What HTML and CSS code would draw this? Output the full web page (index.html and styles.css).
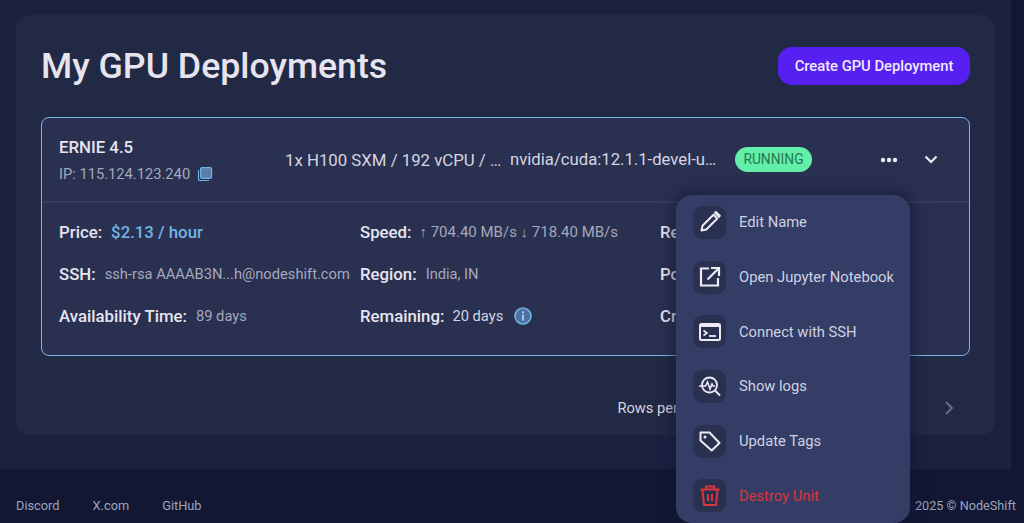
FILE: index.html
```html
<!DOCTYPE html>
<html lang="en">
<head>
<meta charset="utf-8">
<title>My GPU Deployments</title>
<link rel="stylesheet" href="styles.css">
</head>
<body>
<div class="page">
  <main class="main">
    <section class="panel">
      <header class="panel-head">
        <h1 class="title">My GPU Deployments</h1>
        <button class="create-btn">Create GPU Deployment</button>
      </header>
      <article class="deploy">
        <div class="deploy-head">
          <div class="name-col">
            <div class="name">ERNIE 4.5</div>
            <div class="ip">IP: 115.124.123.240
              <svg class="copy-icon" viewBox="0 0 16 16" width="16" height="16"><path d="M1.5 4v9.2c0 .8.6 1.3 1.3 1.3H12" fill="none" stroke="#6fb1e6" stroke-width="1.2"/><rect x="3.6" y="1.6" width="11" height="10.8" rx="1.6" fill="#5a7ea8" stroke="#6fb1e6" stroke-width="1.2"/></svg>
            </div>
          </div>
          <div class="spec">1x H100 SXM / 192 vCPU / …</div>
          <div class="image">nvidia/cuda:12.1.1-devel-u…</div>
          <span class="status">RUNNING</span>
          <div class="head-actions">
            <svg viewBox="0 0 18 6" width="18" height="6"><circle cx="3" cy="3" r="2.2" fill="#eceaf4"/><circle cx="9" cy="3" r="2.2" fill="#eceaf4"/><circle cx="15" cy="3" r="2.2" fill="#eceaf4"/></svg>
            <svg viewBox="0 0 14 9" width="14" height="9"><path d="M1.5 1.5 7 7l5.5-5.5" fill="none" stroke="#eceaf4" stroke-width="2.2"/></svg>
          </div>
        </div>
        <div class="deploy-body">
          <div class="field"><span class="label">Price:</span><span class="price">$2.13 / hour</span></div>
          <div class="field"><span class="label">Speed:</span><span class="value speed">↑ 704.40 MB/s ↓ 718.40 MB/s</span></div>
          <div class="field"><span class="label">Reliability:</span></div>
          <div class="field"><span class="label">SSH:</span><span class="value">ssh-rsa AAAAB3N...h@nodeshift.com</span></div>
          <div class="field"><span class="label">Region:</span><span class="value">India, IN</span></div>
          <div class="field"><span class="label">Ports:</span></div>
          <div class="field"><span class="label">Availability Time:</span><span class="value">89 days</span></div>
          <div class="field"><span class="label">Remaining:</span><span class="value strong">20 days</span>
            <svg class="info" viewBox="0 0 18 18" width="18" height="18"><circle cx="9" cy="9" r="8" fill="#50709f" stroke="#6fb1e6" stroke-width="1.6"/><rect x="8" y="7.6" width="2" height="6" fill="#9fcbf0"/><rect x="8" y="4.4" width="2" height="2" fill="#9fcbf0"/></svg>
          </div>
          <div class="field"><span class="label">Created:</span></div>
        </div>
      </article>
      <footer class="pager">
        <span class="rows">Rows per page</span>
        <svg viewBox="0 0 10 16" width="10" height="16"><path d="M2 2l6 6-6 6" fill="none" stroke="#6a7190" stroke-width="1.8"/></svg>
      </footer>
    </section>
  </main>
  <footer class="site-foot">
    <nav class="foot-links"><a>Discord</a><a>X.com</a><a>GitHub</a></nav>
    <span class="copyright">2025 © NodeShift</span>
  </footer>
</div>
<div class="menu">
  <div class="menu-item"><span class="menu-icon"><svg viewBox="0 0 24 24" width="24" height="24"><path d="M3.500 20.500l1-4.800L15.500 4.700l3.800 3.800L8.300 19.500z" fill="none" stroke="#eceaf4" stroke-width="2" stroke-linejoin="round"/><path d="M16.800 2.900l1.200-1 4 4-1 1.200z" fill="#eceaf4" stroke="#eceaf4" stroke-width="1.600"/></svg></span>Edit Name</div>
  <div class="menu-item"><span class="menu-icon"><svg viewBox="0 0 24 24" width="24" height="24"><path d="M11 3.500H3v17h17V13" fill="none" stroke="#eceaf4" stroke-width="2.200"/><path d="M9.500 14.500 20 4M13 3h8v8" fill="none" stroke="#eceaf4" stroke-width="2.200"/></svg></span>Open Jupyter Notebook</div>
  <div class="menu-item"><span class="menu-icon"><svg viewBox="0 0 24 24" width="24" height="24"><rect x="2" y="4" width="20" height="16" rx="1.500" fill="none" stroke="#eceaf4" stroke-width="2"/><path d="M2 5h20v2H2z" fill="#eceaf4"/><path d="M5.500 10.500 9 13l-3.500 2.500" fill="none" stroke="#eceaf4" stroke-width="1.600"/><path d="M11 16h7" stroke="#eceaf4" stroke-width="1.800"/></svg></span>Connect with SSH</div>
  <div class="menu-item"><span class="menu-icon"><svg viewBox="0 0 24 24" width="24" height="24"><circle cx="11.500" cy="11" r="7.500" fill="none" stroke="#eceaf4" stroke-width="1.800"/><path d="M17 16.500l5 5" stroke="#eceaf4" stroke-width="2"/><path d="M1 12h6.500l2-4 2.500 7 2-5 1 2h2" fill="none" stroke="#eceaf4" stroke-width="1.600"/></svg></span>Show logs</div>
  <div class="menu-item"><span class="menu-icon"><svg viewBox="0 0 24 24" width="24" height="24"><path d="M2.500 3.500h9l10 10.500-7.800 7.500L2.500 11.500z" fill="none" stroke="#eceaf4" stroke-width="2" stroke-linejoin="round"/><circle cx="7" cy="8" r="1.500" fill="#eceaf4"/></svg></span>Update Tags</div>
  <div class="menu-item danger"><span class="menu-icon"><svg viewBox="0 0 24 24" width="24" height="24"><path d="M2.500 5.500h19M8 5V2.500h8V5" fill="none" stroke="#d8363a" stroke-width="2"/><path d="M4.500 6l1.500 15h12l1.500-15" fill="none" stroke="#d8363a" stroke-width="2"/><path d="M10 10v7M14 10v7" stroke="#d8363a" stroke-width="2"/></svg></span>Destroy Unit</div>
</div>
</body>
</html>
```
FILE: styles.css
```css
* { box-sizing: border-box; }
html, body { margin: 0; height: 523px; overflow: hidden; }
body { background: #121833; font-family: Roboto, "Liberation Sans", sans-serif; color: #eceaf4; position: relative; }
.page { height: 523px; display: flex; flex-direction: column; }
.main { width: 1011px; height: 469px; padding: 15px 16px 34px; background: #1b2240; flex: none; }
.panel { height: 420px; background: #222945; border-radius: 14px; padding: 32px 25px 0; display: flex; flex-direction: column; }
.panel-head { height: 38px; display: flex; justify-content: space-between; align-items: center; }
.title { margin: 0; font-size: 35.700px; font-weight: 500; line-height: 38px; color: #e6e4ee; }
.create-btn { width: 192px; height: 38px; border: 0; border-radius: 14px; background: #5720f3; color: #eeeafc; font: 500 14.750px Roboto, sans-serif; }
.deploy { margin-top: 32px; height: 239px; background: #2a3050; border: 1px solid #78b6ea; border-radius: 8px; display: flex; flex-direction: column; }
.deploy-head { height: 85px; border-bottom: 2px solid #363d5e; padding-left: 17px; display: flex; align-items: center; }
.name-col { width: 226px; padding-top: 1px; }
.name { font-size: 16.800px; font-weight: 500; line-height: 20px; color: #e6e5f0; }
.ip { margin-top: 8px; font-size: 14.700px; line-height: 18px; color: #a5a8bd; display: flex; align-items: center; gap: 7px; }
.copy-icon { flex: none; }
.spec { width: 225px; font-size: 16.800px; color: #d5d5e2; }
.image { width: 225px; font-size: 16.700px; color: #d5d5e2; }
.status { width: 77px; height: 25px; border-radius: 13px; background: #63efaa; color: #23794f; font-size: 13.800px; line-height: 25px; text-align: center; }
.head-actions { margin-left: 68px; display: flex; align-items: center; gap: 26px; }
.deploy-body { padding: 17px 0 0 17px; display: grid; grid-template-columns: 301px 300px 1fr; grid-auto-rows: 42px; }
.field { display: flex; align-items: center; height: 24px; gap: 9px; white-space: nowrap; }
.label { font-size: 16.800px; font-weight: 500; color: #e6e5f0; }
.value { font-size: 14.700px; color: #a5a8bd; }
.value.speed { font-size: 15px; margin-left: -1px; }
.value.strong { color: #d5d5e2; margin-left: -1px; }
.price { font-size: 16.800px; font-weight: 500; color: #72b3e8; }
.info { margin-left: 2px; flex: none; }
.pager { margin-top: 40px; height: 24px; display: flex; align-items: center; justify-content: flex-end; gap: 230px; padding-right: 16px; }
.rows { font-size: 14.700px; color: #d5d5e2; }
.site-foot { flex: 1; display: flex; justify-content: space-between; align-items: center; padding: 18px 8px 0 16px; font-size: 12.800px; color: #9ea3bd; }
.foot-links { display: flex; gap: 33px; }
.copyright { font-size: 12.700px; }
.menu { position: absolute; left: 676px; top: 195px; width: 234px; height: 328px; background: #343d65; border-radius: 16px; padding: 0 0 0 17px; box-shadow: 0 0 12px 5px rgba(18, 22, 52, 0.5); }
.menu-item { height: 54.700px; display: flex; align-items: center; gap: 13px; font-size: 14.750px; color: #cfd1e2; white-space: nowrap; }
.menu-icon { width: 33px; height: 33px; border-radius: 9px; background: #2a3050; display: flex; align-items: center; justify-content: center; flex: none; }
.menu-icon svg { width: 24px; height: 24px; }
.danger { color: #d8363a; }
```
